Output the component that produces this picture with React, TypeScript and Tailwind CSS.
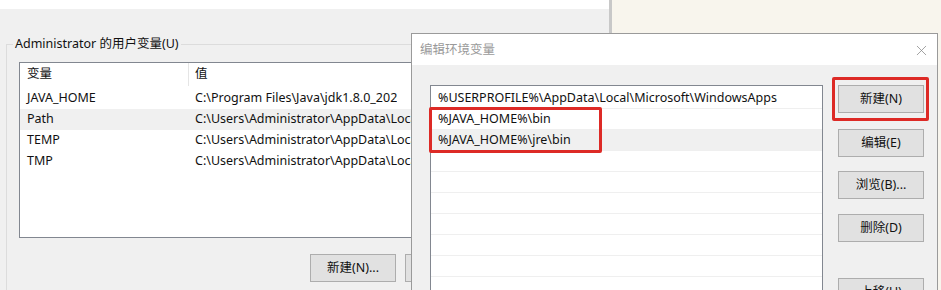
import { X } from 'lucide-react'

const FONT = 'font-["Noto_Sans","Noto_Sans_CJK_SC",sans-serif] text-[12.5px] text-[#111]'

const userVars = [
  { name: 'JAVA_HOME', value: 'C:\\Program Files\\Java\\jdk1.8.0_202' },
  { name: 'Path', value: 'C:\\Users\\Administrator\\AppData\\Local\\Microsoft\\WindowsApps;', hl: true },
  { name: 'TEMP', value: 'C:\\Users\\Administrator\\AppData\\Local\\Temp' },
  { name: 'TMP', value: 'C:\\Users\\Administrator\\AppData\\Local\\Temp' },
]

const pathRows = [
  '%USERPROFILE%\\AppData\\Local\\Microsoft\\WindowsApps',
  '%JAVA_HOME%\\bin',
  '%JAVA_HOME%\\jre\\bin',
  '', '', '', '', '', '', '',
]

const WIN_BTN = 'h-[28px] w-[86px] shrink-0 bg-[#e1e1e1] border border-[#adadad] flex items-center justify-center leading-none'

function UserVarsWindow() {
  return (
    <div className="w-[612px] h-full bg-[#f0f0f0] border-r-[3px] border-[#c8c8c8] flex flex-col shrink-0">
      <div className="h-[9px] bg-white shrink-0" />
      {/* group box */}
      <div className="relative mt-[35px] ml-[6px] mr-[10px] h-[260px] border border-[#dcdcdc] border-b-0">
        <div className="absolute -top-[10px] left-[6px] bg-[#f0f0f0] px-[2px] leading-[18px]">
          Administrator 的用户变量(U)
        </div>
        <div className="mt-[17px] ml-[12px] mr-[10px] h-[176px] bg-white border border-[#828790] flex flex-col">
          <div className="h-[23px] flex items-center shrink-0">
            <div className="w-[169px] pl-[7px] border-r border-[#e5e5e5] h-full flex items-center">变量</div>
            <div className="pl-[6px]">值</div>
          </div>
          <div className="h-[2px]" />
          {userVars.map(v => (
            <div key={v.name} className={`h-[21px] flex items-center shrink-0 ${v.hl ? 'bg-[#f0f0f0]' : ''}`}>
              <div className="w-[169px] pl-[7px] pr-[2px]">{v.name}</div>
              <div className="pl-[6px] whitespace-nowrap overflow-hidden">{v.value}</div>
            </div>
          ))}
        </div>
        <div className="mt-[16px] flex gap-[9px] pl-[303px]">
          <div className={WIN_BTN}>新建(N)...</div>
          <div className={WIN_BTN}>编辑(I)...</div>
        </div>
      </div>
    </div>
  )
}

function EditPathDialog() {
  return (
    <div className="absolute left-[411px] top-[33px] w-[527px] h-[270px] border border-[#9a9a9a] bg-[#f0f0f0] flex flex-col">
      <div className="h-[31px] pt-[1px] bg-white flex items-center justify-between pl-[8px] pr-[7px] shrink-0">
        <span className="text-[#9a9a9a]">编辑环境变量</span>
        <X size={17} strokeWidth={1.1} className="text-[#8a8a8a]" />
      </div>
      <div className="flex pl-[18px] pt-[20px] gap-[15px]">
        <div className="w-[393px] h-[240px] pt-[2px] bg-white border border-[#828790] border-b-0 flex flex-col">
          {pathRows.map((r, i) => (
            <div key={i}
              className={`h-[21px] shrink-0 flex items-center pl-[7px] border-b border-[#efefef] whitespace-nowrap ${i === 2 ? 'bg-[#f0f0f0]' : ''}`}>
              {r}
            </div>
          ))}
        </div>
        <div className="flex flex-col">
          <div className={WIN_BTN}>新建(N)</div>
          <div className={`${WIN_BTN} mt-[16px]`}>编辑(E)</div>
          <div className={`${WIN_BTN} mt-[14px]`}>浏览(B)...</div>
          <div className={`${WIN_BTN} mt-[15px]`}>删除(D)</div>
          <div className={`${WIN_BTN} mt-[36px]`}>上移(U)</div>
        </div>
      </div>
    </div>
  )
}

export default function App() {
  return (
    <div className={`relative w-[941px] h-[290px] overflow-hidden bg-[#f8f5ed] flex ${FONT}`}>
      <UserVarsWindow />
      <EditPathDialog />
      {/* red annotation frames */}
      <div className="absolute left-[429px] top-[107px] w-[173px] h-[46px] border-[3px] border-[#dd2a26] rounded-[2px]" />
      <div className="absolute left-[832px] top-[77px] w-[97px] h-[44px] border-[3px] border-[#dd2a26] rounded-[2px]" />
    </div>
  )
}
